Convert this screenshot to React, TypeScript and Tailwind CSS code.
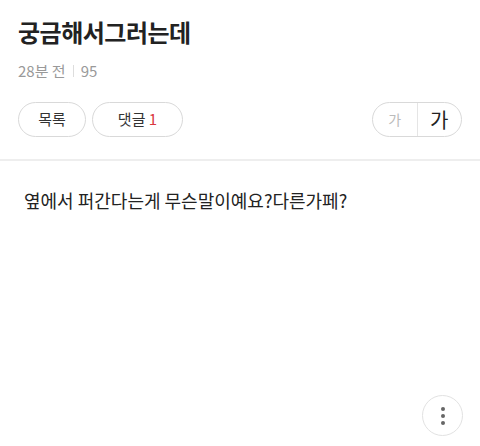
import React from 'react';

const font = { fontFamily: '"Noto Sans CJK KR", "Noto Sans", sans-serif' };

export default function App() {
  return (
    <div className="w-[480px] h-[446px] bg-white flex flex-col relative overflow-hidden" style={font}>
      <header className="px-[18px] pt-[14px]">
        <h1 className="text-[24px] leading-[36px] font-bold text-[#222] tracking-[-0.5px]">궁금해서그러는데</h1>
        <div className="mt-[11px] flex items-center text-[15px] leading-[20px] text-[#999]">
          <span>28분 전</span>
          <span className="mx-[7px] h-[12px] w-px bg-[#ddd]" />
          <span>95</span>
        </div>
        <div className="mt-[21px] flex items-center justify-between">
          <div className="flex gap-[6px]">
            <button className="h-[35px] w-[68px] rounded-full border border-[#d9d9d9] text-[15px] text-[#333]">목록</button>
            <button className="h-[35px] w-[91px] rounded-full border border-[#d9d9d9] text-[15px] text-[#333]">
              댓글 <span className="text-[#d9363e]">1</span>
            </button>
          </div>
          <div className="flex h-[35px] w-[90px] items-center rounded-full border border-[#d9d9d9]">
            <span className="flex-1 text-center text-[14px] text-[#bbb]">가</span>
            <span className="h-full w-px bg-[#e5e5e5]" />
            <span className="flex-1 text-center text-[20px] text-[#222]">가</span>
          </div>
        </div>
      </header>
      <div className="mt-[22px] h-[2px] bg-[#eeeeee]" />
      <main className="px-[24px] pt-[26px]">
        <p className="text-[18px] leading-[26px] text-[#222]">옆에서 퍼간다는게 무슨말이예요?다른가페?</p>
      </main>
      <button className="absolute left-[422px] top-[395px] flex h-[41px] w-[41px] flex-col items-center justify-center gap-[3px] rounded-full border border-[#e2e2e2] bg-white">
        <span className="h-[4px] w-[4px] rounded-full bg-[#666]" />
        <span className="h-[4px] w-[4px] rounded-full bg-[#666]" />
        <span className="h-[4px] w-[4px] rounded-full bg-[#666]" />
      </button>
    </div>
  );
}
